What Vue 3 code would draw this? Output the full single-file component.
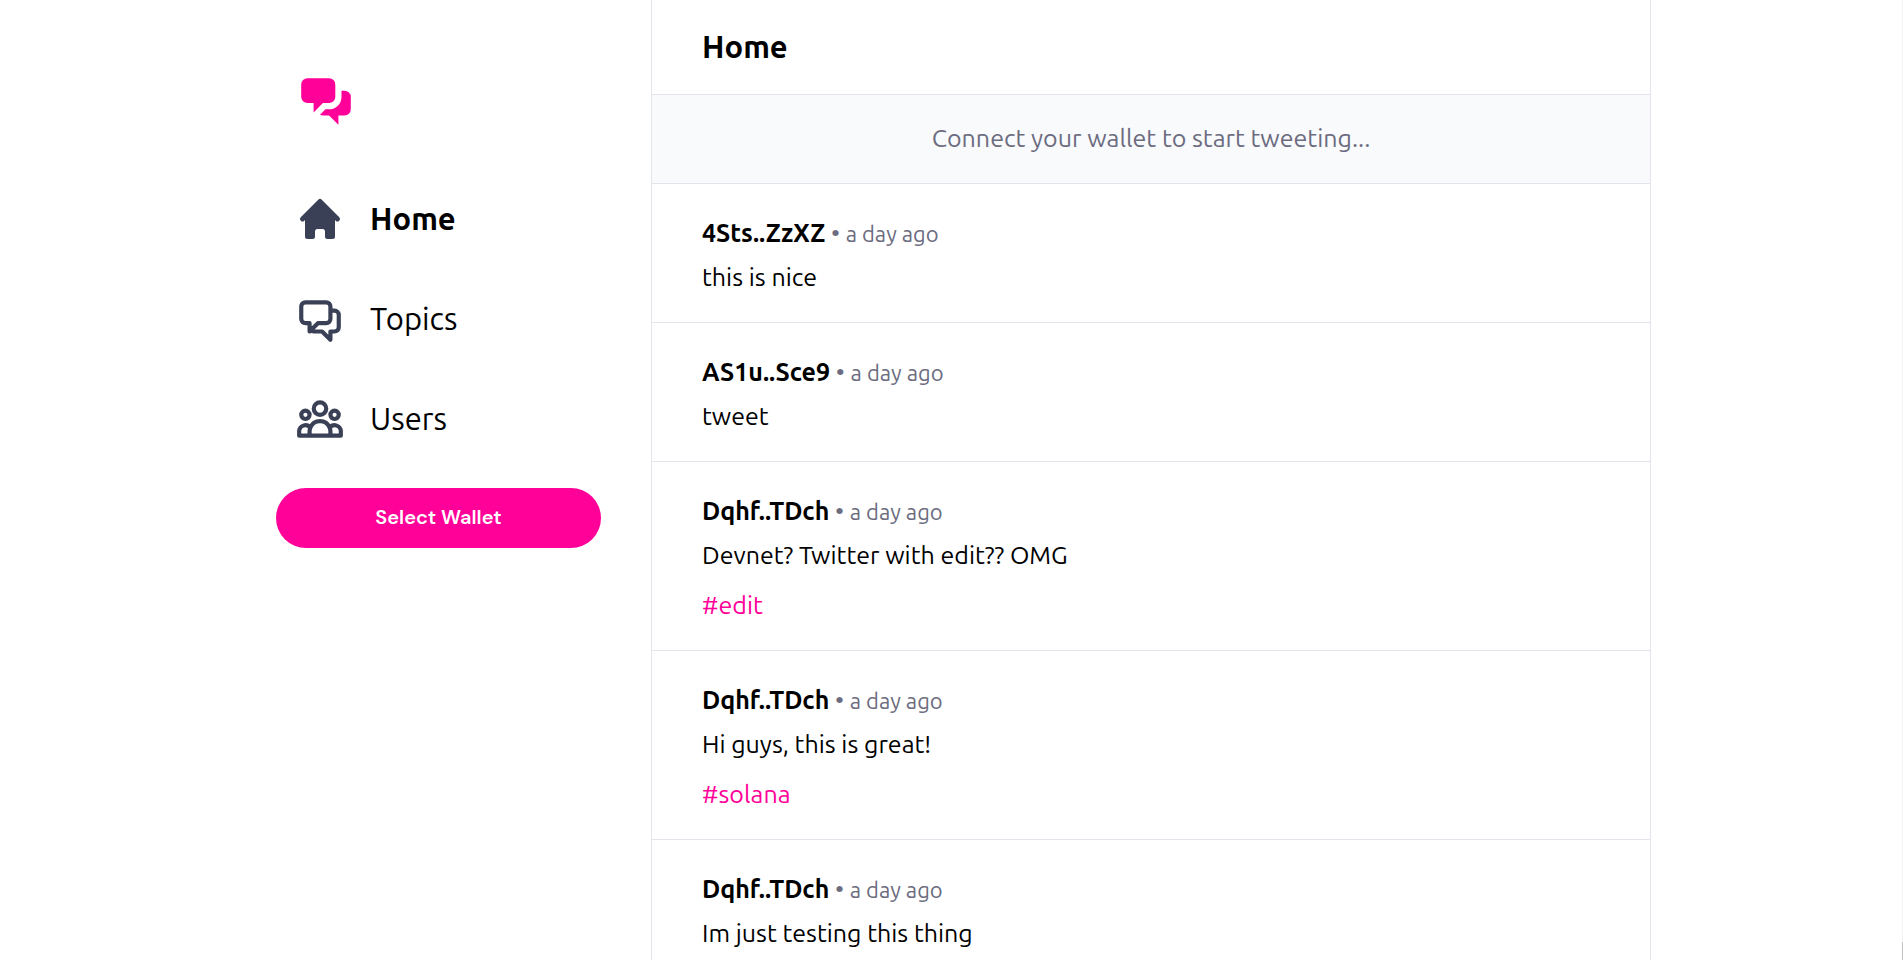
<script setup>
const navItems = [
  { label: 'Home', icon: 'home', active: true },
  { label: 'Topics', icon: 'topics', active: false },
  { label: 'Users', icon: 'users', active: false },
]

const tweets = [
  { id: 1, author: '4Sts..ZzXZ', time: 'a day ago', content: 'this is nice' },
  { id: 2, author: 'AS1u..Sce9', time: 'a day ago', content: 'tweet' },
  { id: 3, author: 'Dqhf..TDch', time: 'a day ago', content: 'Devnet? Twitter with edit?? OMG', topic: 'edit' },
  { id: 4, author: 'Dqhf..TDch', time: 'a day ago', content: 'Hi guys, this is great!', topic: 'solana' },
  { id: 5, author: 'Dqhf..TDch', time: 'a day ago', content: 'Im just testing this thing' },
]
</script>

<template>
  <div class="page">
    <div class="container">
      <aside class="sidebar">
        <a href="#" class="logo" aria-label="Home page">
          <svg viewBox="0 0 20 20" fill="currentColor" aria-hidden="true">
            <path d="M2 5a2 2 0 012-2h7a2 2 0 012 2v4a2 2 0 01-2 2H9l-3 3v-3H4a2 2 0 01-2-2V5z" />
            <path d="M15 7v2a4 4 0 01-4 4H9.828l-1.766 1.767c.28.149.599.233.938.233h2l3 3v-3h2a2 2 0 002-2V9a2 2 0 00-2-2h-1z" />
          </svg>
        </a>
        <nav class="nav">
          <a v-for="item in navItems" :key="item.label" href="#" class="nav-item" :class="{ active: item.active }">
            <svg v-if="item.icon === 'home'" viewBox="0 0 20 20" fill="currentColor" aria-hidden="true">
              <path d="M10.707 2.293a1 1 0 00-1.414 0l-7 7a1 1 0 001.414 1.414L4 10.414V17a1 1 0 001 1h2a1 1 0 001-1v-2a1 1 0 011-1h2a1 1 0 011 1v2a1 1 0 001 1h2a1 1 0 001-1v-6.586l.293.293a1 1 0 001.414-1.414l-7-7z" />
            </svg>
            <svg v-else class="outline" viewBox="0 0 24 24" aria-hidden="true">
              <path v-if="item.icon === 'topics'" d="M17 8h2a2 2 0 012 2v6a2 2 0 01-2 2h-2v4l-4-4H9a1.994 1.994 0 01-1.414-.586m0 0L11 14h4a2 2 0 002-2V6a2 2 0 00-2-2H5a2 2 0 00-2 2v6a2 2 0 002 2h2v4l.586-.586z" />
              <path v-else d="M17 20h5v-2a3 3 0 00-5.356-1.857M17 20H7m10 0v-2c0-.656-.126-1.283-.356-1.857M7 20H2v-2a3 3 0 015.356-1.857M7 20v-2c0-.656.126-1.283.356-1.857m0 0a5.002 5.002 0 019.288 0M15 7a3 3 0 11-6 0 3 3 0 016 0zm6 3a2 2 0 11-4 0 2 2 0 014 0zM7 10a2 2 0 11-4 0 2 2 0 014 0z" />
            </svg>
            <span>{{ item.label }}</span>
          </a>
        </nav>
        <button type="button" class="wallet">Select Wallet</button>
      </aside>

      <main class="main">
        <header class="header"><h1>Home</h1></header>
        <p class="notice">Connect your wallet to start tweeting...</p>
        <article v-for="tweet in tweets" :key="tweet.id" class="tweet">
          <div class="meta">
            <a href="#" class="author">{{ tweet.author }}</a>
            <span class="dot"> • </span>
            <a href="#" class="time">{{ tweet.time }}</a>
          </div>
          <p class="content">{{ tweet.content }}</p>
          <a v-if="tweet.topic" href="#" class="topic">#{{ tweet.topic }}</a>
        </article>
      </main>
    </div>
  </div>
</template>

<style>
body {
  margin: 0;
  background: #fff;
}
</style>

<style scoped>
.page {
  height: 100vh;
  box-sizing: border-box;
  overflow: hidden;
  border-right: 1px solid #f1f1f1;
  color: #000;
  font-family: Ubuntu, "Noto Sans", sans-serif;
  font-size: 25px;
  line-height: 37px;
}
.page::after {
  content: "";
  position: fixed;
  right: 0;
  bottom: 0;
  width: 1px;
  height: 18px;
  background: #c1c1c1;
}
a {
  color: inherit;
  text-decoration: none;
}
.container {
  display: grid;
  grid-template-columns: minmax(0, 2fr) minmax(0, 5fr);
  max-width: 1400px;
  height: 100%;
  margin: 0 auto;
}
.sidebar {
  padding: 50px 50px 0 25px;
}
.logo {
  display: flex;
  padding: 19px;
  color: #ff0099;
}
.logo svg {
  width: 62px;
  height: 62px;
}
.nav {
  display: flex;
  flex-direction: column;
  margin: 19px 0;
}
.nav-item {
  display: flex;
  align-items: center;
  gap: 25px;
  padding: 25px 19px;
  font-size: 31px;
  line-height: 38px;
}
.nav-item svg {
  width: 50px;
  height: 50px;
  color: #3a4156;
}
.outline {
  fill: none;
  stroke: currentColor;
  stroke-width: 2;
  stroke-linecap: round;
  stroke-linejoin: round;
}
.active {
  font-weight: 700;
}
.wallet {
  width: 100%;
  height: 60px;
  padding: 0 25px 2px;
  border: 0;
  border-radius: 30px;
  background: #ff0099;
  color: #fff;
  font-family: "DM Sans", Inter, sans-serif;
  font-size: 20px;
  font-weight: 600;
  cursor: pointer;
}
.main {
  overflow-y: auto;
  scrollbar-width: none;
  border: solid #e4e4ec;
  border-width: 0 1px;
}
.header {
  padding: 28px 50px;
  border-bottom: 1px solid #e4e4ec;
}
.header h1 {
  margin: 0;
  font-size: 31px;
  font-weight: 700;
  line-height: 38px;
}
.notice {
  margin: 0;
  padding: 25px 50px 26px;
  border-bottom: 1px solid #e4e4ec;
  background: #f9fafc;
  color: #6c6c80;
  text-align: center;
}
.tweet {
  padding: 31px 50px 26px;
  border-bottom: 1px solid #e4e4ec;
}
.author {
  font-weight: 700;
}
.dot {
  color: #6c6c80;
}
.time {
  color: #6c6c80;
  font-size: 22px;
  line-height: 31px;
}
.content {
  margin: 7px 0 0;
}
.topic {
  display: block;
  margin-top: 13px;
  color: #ff0099;
}
</style>
